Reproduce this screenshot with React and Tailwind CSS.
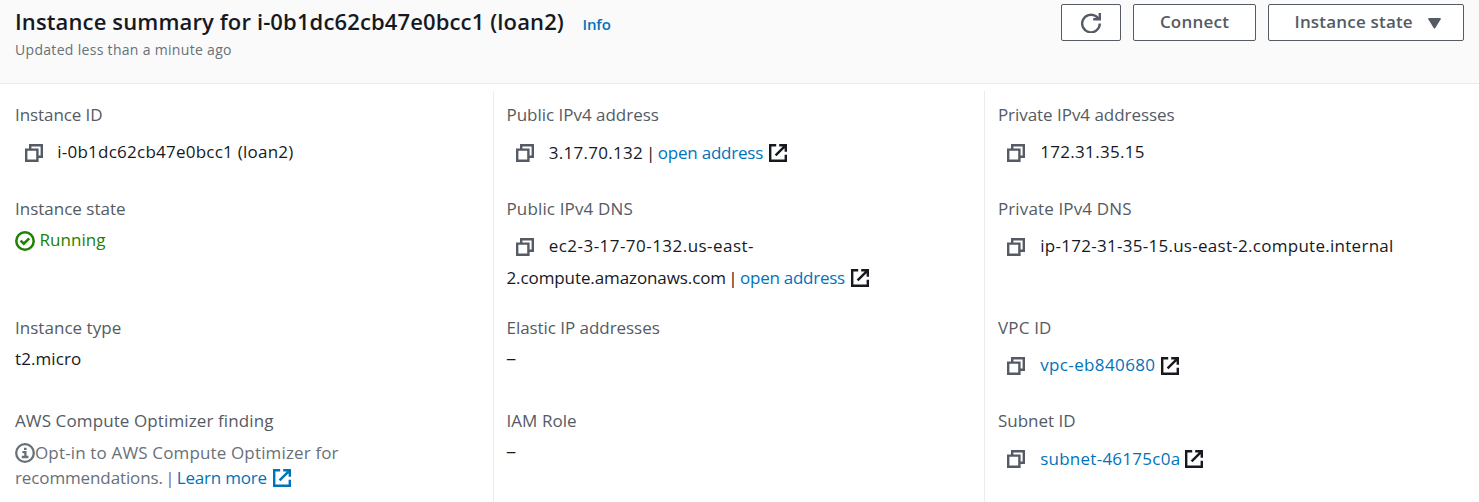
import React from "react";

function CopyIcon() {
  return (
    <svg width="18" height="18" viewBox="0 0 18 18" fill="none" stroke="#545b64" strokeWidth="2.4" className="mt-[3.5px] shrink-0">
      <path d="M1.2 5.6h11.2v11.2H1.2z" />
      <path d="M5.2 5.6V1.2h11.6v11.6h-4.4" />
    </svg>
  );
}

function ExternalIcon({ className = "text-[#16191f]" }) {
  return (
    <svg width="18" height="18" viewBox="0 0 18 18" fill="none" stroke="currentColor" strokeWidth="2.4" className={`shrink-0 ${className}`}>
      <path d="M7.2 1.2H1.2v15.6h15.6v-6" />
      <path d="M10.2 1.2h6.6v6.6M16.4 1.6L6.6 11.4" />
    </svg>
  );
}

function CheckIcon() {
  return (
    <svg width="20" height="20" viewBox="0 0 20 20" fill="none" stroke="#1d8102" strokeWidth="2.5" className="mt-[3px] shrink-0">
      <circle cx="10" cy="10" r="8.7" />
      <path d="M5.6 9.6l3.2 3.1 5.4-5.4" />
    </svg>
  );
}

function InfoIcon() {
  return (
    <svg width="20" height="20" viewBox="0 0 20 20" fill="none" stroke="#687078" strokeWidth="2.3" className="shrink-0">
      <circle cx="10" cy="10" r="8.8" />
      <path d="M9 5.9h2.6M7.4 9.2h3v4.6M6.8 14h6.6" />
    </svg>
  );
}

function RefreshIcon() {
  return (
    <svg width="20" height="20" viewBox="0 0 20 20" fill="none" stroke="#545b64" strokeWidth="2.4">
      <path d="M18.8 10.6A8.8 8.8 0 1 1 15 3.3l2.8 2.4" />
      <path d="M18.8 0v6.2h-6.6" />
    </svg>
  );
}

function Field({ label, labelClass, children }) {
  return (
    <div>
      <div className={`h-6 text-[#545b64] ${labelClass}`}>{label}</div>
      {children}
    </div>
  );
}

function CopyRow({ children }) {
  return (
    <div className="mt-[13px] flex h-6 items-start pl-[9.5px]">
      <CopyIcon />
      <div className="ml-[14.75px] flex">{children}</div>
    </div>
  );
}

function Dash() {
  return <div className="-ml-px mt-[6px] w-4 origin-left scale-x-[1.2]">–</div>;
}

function Column({ className, children }) {
  return <div className={`mt-[7px] grid grid-rows-[94px_119px_93px_94px] pt-3 ${className}`}>{children}</div>;
}

export default function App() {
  return (
    <div className="flex h-[502px] w-[1479px] flex-col overflow-hidden whitespace-nowrap bg-white font-['Open_Sans','Noto_Sans',sans-serif] text-[17px] leading-6 text-[#16191f]">
      <header className="flex h-[84px] shrink-0 justify-between border-b border-[#eaeded] bg-[#fafafa] pl-[15px] pr-[15px]">
        <div>
          <div className="flex h-[38px] items-baseline pt-[6px]">
            <h1 className="text-[22px] font-semibold leading-[30px] tracking-[0.13px]">Instance summary for i-0b1dc62cb47e0bcc1 (loan2)</h1>
            <a className="ml-[18.5px] text-[15px] font-semibold tracking-[-0.1px] text-[#0073bb]">Info</a>
          </div>
          <p className="text-[14px] tracking-[0.31px] text-[#687078]">Updated less than a minute ago</p>
        </div>
        <div className="flex gap-3 pt-1 font-semibold text-[#545b64]">
          <button className="flex h-[37px] w-[60px] items-center justify-center rounded-[2px] border border-[#545b64] bg-white">
            <RefreshIcon />
          </button>
          <button className="flex h-[37px] w-[123px] items-center justify-center rounded-[2px] border border-[#545b64] bg-white pb-[2px] tracking-[0.22px]">Connect</button>
          <button className="flex h-[37px] w-[196px] items-center rounded-[2px] border border-[#545b64] bg-white pl-[25.5px] tracking-[0.19px]">
            <span className="pb-[2px]">Instance state</span>
            <svg width="13" height="11" viewBox="0 0 13 11" className="ml-[15px] mt-px fill-[#545b64]">
              <path d="M1 0h11q1.2.2.7 1.2L7.3 10q-.8 1-1.6 0L.3 1.2Q-.2.2 1 0z" />
            </svg>
          </button>
        </div>
      </header>
      <main className="grid flex-1 grid-cols-[493px_491px_495px]">
        <Column className="pl-[15px]">
          <Field label="Instance ID" labelClass="tracking-[-0.08px]">
            <CopyRow><span className="tracking-[0.24px]">i-0b1dc62cb47e0bcc1 (loan2)</span></CopyRow>
          </Field>
          <Field label="Instance state" labelClass="">
            <div className="mt-[7px] flex items-start gap-[4.5px] text-[#1d8102]">
              <CheckIcon />
              <span className="tracking-[0.04px]">Running</span>
            </div>
          </Field>
          <Field label="Instance type" labelClass="tracking-[0.03px]">
            <div className="mt-[7px] tracking-[0.08px]">t2.micro</div>
          </Field>
          <Field label="AWS Compute Optimizer finding" labelClass="tracking-[0.11px]">
            <div className="mt-[7px] leading-[25px] text-[#687078]">
              <div className="flex items-center tracking-[0.15px]"><InfoIcon />Opt-in to AWS Compute Optimizer for</div>
              <div className="flex items-center">
                <span className="tracking-[-0.12px]">recommendations.</span>
                <span className="w-[14px] text-center">|</span>
                <a className="mr-[6px] tracking-[-0.21px] text-[#0073bb]">Learn more</a>
                <ExternalIcon className="text-[#0073bb]" />
              </div>
            </div>
          </Field>
        </Column>
        <Column className="border-l border-[#eaeded] pl-[12.5px]">
          <Field label="Public IPv4 address" labelClass="tracking-[-0.02px]">
            <CopyRow>
              <div className="flex pt-px">
                <span className="w-[95px] tracking-[0.28px]">3.17.70.132</span>
                <span className="w-[14px] text-center">|</span>
                <a className="mr-[5.75px] tracking-[-0.22px] text-[#0073bb]">open address</a>
              </div>
              <ExternalIcon className="mt-[3.5px] text-[#16191f]" />
            </CopyRow>
          </Field>
          <Field label="Public IPv4 DNS" labelClass="tracking-[0.14px]">
            <CopyRow><span className="tracking-[0.46px]">ec2-3-17-70-132.us-east-</span></CopyRow>
            <div className="mt-2 flex">
              <span className="w-[219.5px] tracking-[-0.1px]">2.compute.amazonaws.com</span>
              <span className="w-[14px] text-center">|</span>
              <a className="mr-[6px] tracking-[-0.25px] text-[#0073bb]">open address</a>
              <ExternalIcon className="mt-[3px] text-[#16191f]" />
            </div>
          </Field>
          <Field label="Elastic IP addresses" labelClass="tracking-[-0.05px]">
            <Dash />
          </Field>
          <Field label="IAM Role" labelClass="tracking-[0.05px]">
            <Dash />
          </Field>
        </Column>
        <Column className="border-l border-[#eaeded] pl-[12.9px]">
          <Field label="Private IPv4 addresses" labelClass="tracking-[-0.04px]">
            <CopyRow><span className="tracking-[0.32px]">172.31.35.15</span></CopyRow>
          </Field>
          <Field label="Private IPv4 DNS" labelClass="tracking-[0.14px]">
            <CopyRow><span className="tracking-[0.28px]">ip-172-31-35-15.us-east-2.compute.internal</span></CopyRow>
          </Field>
          <Field label="VPC ID" labelClass="tracking-[0.2px]">
            <CopyRow>
              <a className="mr-[6px] tracking-[0.38px] text-[#0073bb]">vpc-eb840680</a>
              <ExternalIcon className="mt-[3.5px] text-[#16191f]" />
            </CopyRow>
          </Field>
          <Field label="Subnet ID" labelClass="">
            <CopyRow>
              <a className="mr-[5px] pt-px tracking-[0.26px] text-[#0073bb]">subnet-46175c0a</a>
              <ExternalIcon className="mt-[3.5px] text-[#16191f]" />
            </CopyRow>
          </Field>
        </Column>
      </main>
    </div>
  );
}
